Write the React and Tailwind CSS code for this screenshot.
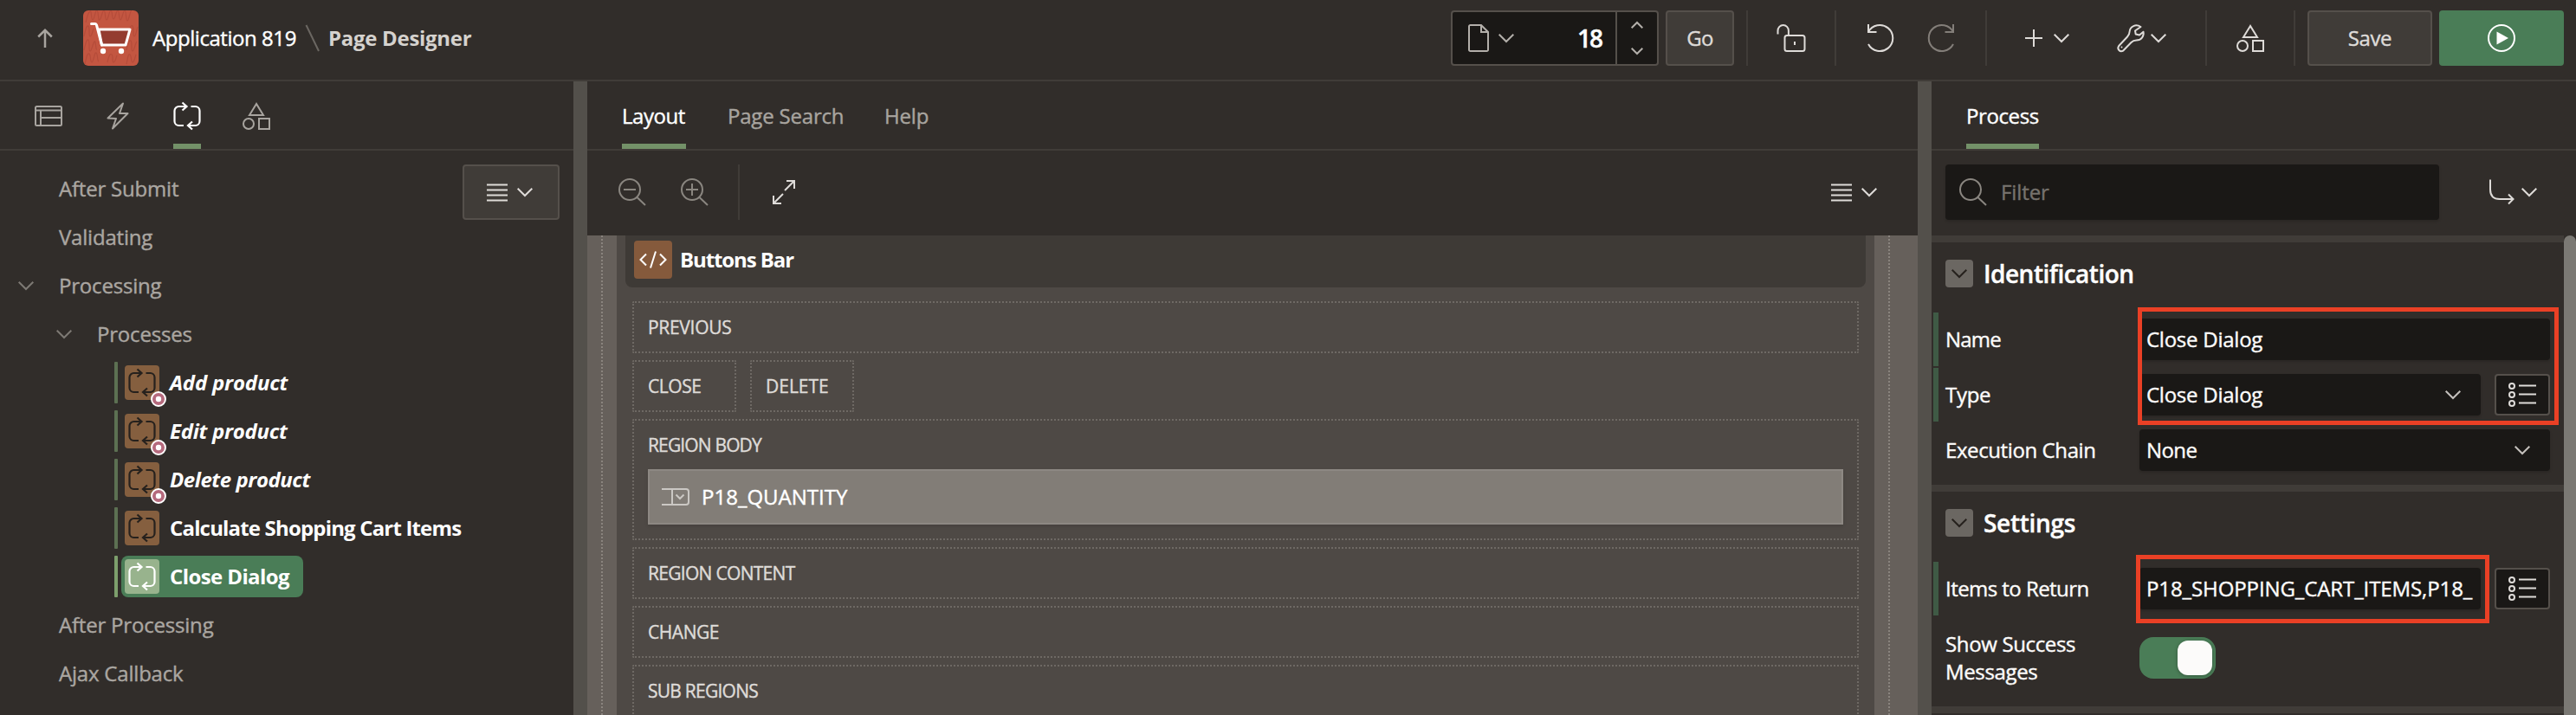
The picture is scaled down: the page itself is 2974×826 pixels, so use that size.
import React from "react";
import clsx from "clsx";

function Svg({ w = 32, h = 32, className, children, sw = 2 }) {
  return (
    <svg
      width={w}
      height={h}
      viewBox={`0 0 ${w} ${h}`}
      fill="none"
      stroke="currentColor"
      strokeWidth={sw}
      className={clsx("block shrink-0 overflow-visible", className)}
    >
      {children}
    </svg>
  );
}

const Chevron = ({ className }) => (
  <Svg w={18} h={10} className={className}>
    <path d="M0.7 0.7L9 9l8.3-8.3" />
  </Svg>
);

const ProcessIcon = ({ className }) => (
  <Svg className={className} sw={2.2}>
    <path d="M12 27H6.500a5 5 0 0 1-5-5V10a5 5 0 0 1 5-5H15.500M10.500 0.500L15.500 5l-5 4.500M20.500 5H25.500a5 5 0 0 1 5 5V22a5 5 0 0 1-5 5H17M22 22.500L17 27l5 4.500" />
  </Svg>
);

const ShapesIcon = ({ className }) => (
  <Svg className={className}>
    <path d="M16 2L8 15h16z" />
    <circle cx="7" cy="25" r="6" />
    <path d="M19 19h12v12H19z" />
  </Svg>
);

const MenuIcon = () => (
  <Svg w={24} h={21}>
    <path d="M0 1.500h24M0 7.500h24M0 13.500h24M0 19.500h24" />
  </Svg>
);

const Divider = ({ className }) => <div className={clsx("h-16 w-[2px] shrink-0 bg-[#403c38]", className)} />;

function Header() {
  return (
    <header className="flex h-[94px] shrink-0 items-start border-b-2 border-[#403c38] pt-3">
      <div className="flex h-16 items-center pl-[43px]">
        <Svg w={18} h={22} className="text-[#a8a49f]" sw={2.5}>
          <path d="M9 22V2M1.200 9.500L9 1.800l7.800 7.700" />
        </Svg>
        <div className="ml-[35px] h-16 w-16 overflow-hidden rounded-md bg-[#c35641]">
          <Svg w={64} h={64}>
            <g stroke="#b54c3a" strokeWidth="1.2">
              <path d="M3 14c2-9 3-12 5-13s1 10 3 10 3-12 5-11 1 12 3 11 3-11 5-11 1 11 3 11 3-11 5-11 1 10 3 10 3-10 5-10 1 11 3 11 3-11 5-11 1 12 3 12 3-12 5-12" />
              <path d="M1 30c2-9 3-13 5-12s0 12 2 12 3-6 4-9M52 30c1-8 3-14 5-12s0 12 2 12 3-9 4-11" />
              <path d="M1 46c2-9 3-13 5-12s0 13 2 13 3-9 5-11 1 10 3 9M50 46c1-8 3-12 5-11s0 12 2 12 3-9 5-11" />
              <path d="M2 62c2-9 3-13 5-12s1 10 3 10 3-12 5-11 1 9 3 10M28 60c2-9 3-10 5-9s0 9 2 9 3-5 4-8M50 62c2-9 2-12 4-11s1 9 3 9 3-6 4-9" />
            </g>
            <path d="M18 22h36L49 40H21.500z" fill="#943c30" stroke="#ffffff" strokeWidth="3" strokeLinejoin="round" />
            <path d="M9.500 15.500h4.500c0.800 0 1.200 0.500 1.500 1.500L21.500 40" stroke="#ffffff" strokeWidth="3" strokeLinecap="round" />
            <circle cx="23" cy="47" r="3.200" fill="#ffffff" stroke="none" />
            <circle cx="44" cy="47" r="3.200" fill="#ffffff" stroke="none" />
          </Svg>
        </div>
        <span className="ml-4 w-[169px] tracking-[-0.45px]">Application 819</span>
        <Svg w={32} h={32} className="text-[#6b6762]">
          <path d="M8.500 1L23 31" />
        </Svg>
        <span className="ml-[2px] font-bold tracking-[-0.3px] text-[#d5d2ce] [-webkit-text-stroke:0px]">Page Designer</span>
      </div>
      <div className="mr-[14px] ml-auto flex h-16 items-center">
        <div className="flex h-16 w-60 items-stretch rounded-[4px] border-2 border-[#55504b] bg-[#1a1816]">
          <div className="flex flex-1 items-center pr-4 pl-[18px]">
            <Svg w={24} h={32} className="text-[#b3afaa]">
              <path d="M3 1h12l8 8v20.500a1.500 1.500 0 0 1-1.500 1.500h-19a1.500 1.500 0 0 1-1.500-1.500v-27A1.500 1.500 0 0 1 3 1zM15 1v8h8" />
            </Svg>
            <Chevron className="ml-[11px] text-[#b3afaa]" />
            <span className="ml-auto text-[28px] font-semibold tracking-[-2px]">18</span>
          </div>
          <div className="flex w-12 flex-col items-center justify-between border-l-2 border-[#55504b] py-[11px] text-[#b3afaa]">
            <Svg w={14} h={8}>
              <path d="M0.700 7.300L7 1l6.300 6.300" />
            </Svg>
            <Svg w={14} h={8}>
              <path d="M0.700 0.700L7 7l6.300-6.300" />
            </Svg>
          </div>
        </div>
        <button className="ml-2 h-16 w-[79px] rounded-[4px] border-2 border-[#55504b] bg-[#403c38] text-[#dedbd8] tracking-[-0.6px]">Go</button>
        <Divider className="ml-[14px]" />
        <Svg w={34} h={32} className="ml-[33px] text-[#dedbd8]">
          <path d="M1.500 11.500V7.500a6.200 6.500 0 0 1 12.400 0V13" />
          <rect x="9.500" y="13" width="23" height="18" rx="2.500" />
          <path d="M21 20v4" />
        </Svg>
        <Divider className="ml-[33px]" />
        <Svg w={31} h={32} className="ml-9 text-[#dedbd8]">
          <path d="M1 0V9H10.500M1 9A15 15 0 1 1 1 23" />
        </Svg>
        <Svg w={31} h={32} className="ml-[38px] text-[#837e79]">
          <path d="M30 0V9H20.500M30 9A15 15 0 1 0 30 23" />
        </Svg>
        <Divider className="ml-9" />
        <Svg w={20} h={20} className="ml-11 text-[#dedbd8]">
          <path d="M10 0v20M0 10h20" />
        </Svg>
        <Chevron className="ml-[13px] text-[#dedbd8]" />
        <Svg className="ml-[55px] text-[#dedbd8]">
          <path
            strokeLinejoin="round"
            d="M27.500 3C22-0.500 15 2 14.500 9c0 3-1 4-2.500 5.500L2.200 25c-2.500 3.500 1.300 8 5.300 5.300l9-9.300c2-2 3.500-2.500 6-2.500 5.500 0 9-4.500 8-9.700l-4.500 3.700-4.300-1-.7-4z"
          />
          <circle cx="5.500" cy="26.500" r="1" fill="currentColor" stroke="none" />
        </Svg>
        <Chevron className="ml-[7px] text-[#dedbd8]" />
        <Divider className="ml-[45px]" />
        <ShapesIcon className="ml-[34px] text-[#dedbd8]" />
        <Divider className="ml-[34px]" />
        <button className="ml-[14px] h-16 w-36 rounded-[4px] border-2 border-[#55504b] bg-[#403c38] text-[#dedbd8] tracking-[-0.4px]">Save</button>
        <button className="ml-2 flex h-16 w-36 items-center justify-center rounded-[4px] bg-[#4a7d57]">
          <Svg>
            <circle cx="16" cy="16" r="15" />
            <path d="M10.500 8.500v15L24 16z" fill="currentColor" stroke="none" />
          </Svg>
        </button>
      </div>
    </header>
  );
}

const PROCESSES = [
  { name: "Add product", badge: true, track: "tracking-[-0.2px]" },
  { name: "Edit product", badge: true, track: "tracking-[-0.3px]" },
  { name: "Delete product", badge: true, track: "tracking-[-0.45px]" },
  { name: "Calculate Shopping Cart Items", track: "tracking-[-0.83px]" },
  { name: "Close Dialog", selected: true, track: "tracking-[-0.6px]" },
];

const treeRow = "flex h-14 items-center text-[#aaa6a1] tracking-[-0.2px]";

function ProcessTree() {
  return (
    <section className="flex w-[662px] shrink-0 flex-col">
      <nav className="flex h-20 items-start border-b-2 border-[#403c38] pl-10 text-[#a8a49f]">
        <Svg className="mt-6">
          <rect x="1" y="5" width="30" height="22" rx="1.500" />
          <path d="M1 9.500h30M7 9.500V27M7 18h24" />
        </Svg>
        <Svg className="mt-6 ml-12">
          <path d="M22 1.500L18 13h9.500L10 30.500 14 19 4.500 18.500z" strokeLinejoin="round" />
        </Svg>
        <div className="ml-12 flex h-[78px] w-8 flex-col justify-between border-b-[6px] border-[#739168] pt-6 text-white">
          <ProcessIcon />
        </div>
        <ShapesIcon className="mt-6 ml-12" />
      </nav>
      <div className="flex flex-1 items-start pt-4">
        <div className="flex-1">
          <div className={treeRow}>
            <span className="ml-[68px]">After Submit</span>
          </div>
          <div className={treeRow}>
            <span className="ml-[68px]">Validating</span>
          </div>
          <div className={treeRow}>
            <Chevron className="ml-[21px] text-[#7d7974]" />
            <span className="ml-[29px]">Processing</span>
          </div>
          <div className={treeRow}>
            <Chevron className="ml-[65px] text-[#7d7974]" />
            <span className="ml-[29px]">Processes</span>
          </div>
          {PROCESSES.map((p) => (
            <div key={p.name} className={treeRow}>
              <div className={clsx("ml-[132px] h-12 w-1 rounded-[1px]", p.selected ? "bg-[#7d9f6c]" : "bg-[#5c7052]")} />
              <div className={clsx("ml-1 flex h-12 items-center rounded-lg pr-4 pl-1", p.selected && "bg-[#4a7d57]")}>
                <div
                  className={clsx(
                    "relative flex h-10 w-10 items-center justify-center rounded-[4px]",
                    p.selected ? "bg-[#98b38d] text-white" : "bg-[#855f3f] text-[#26211d]"
                  )}
                >
                  <ProcessIcon />
                  {p.badge && (
                    <Svg w={18} h={18} className="absolute top-[30px] left-[30px]">
                      <circle cx="9" cy="9" r="8" fill="#b56a7d" stroke="#ffffff" />
                      <circle cx="9" cy="9" r="3.200" fill="#ffffff" stroke="none" />
                    </Svg>
                  )}
                </div>
                <span className={clsx("ml-3 whitespace-nowrap font-bold text-white [-webkit-text-stroke:0px]", p.track, p.badge && "italic")}>{p.name}</span>
              </div>
            </div>
          ))}
          <div className={treeRow}>
            <span className="ml-[68px]">After Processing</span>
          </div>
          <div className={treeRow}>
            <span className="ml-[68px]">Ajax Callback</span>
          </div>
        </div>
        <button className="mr-4 -ml-28 flex h-16 w-28 items-center justify-center gap-[11px] rounded-[4px] border-2 border-[#55504b] bg-[#403c38] pr-[3px] text-[#dedbd8]">
          <MenuIcon />
          <Chevron />
        </button>
      </div>
    </section>
  );
}

const slotBox = "flex items-center rounded-[2px] border-2 border-dotted border-[#6e6964] pt-[2px] pl-4 text-[21px] text-[#dedbd8]";

function Slot({ children, className }) {
  return <div className={clsx(slotBox, "h-[60px] shrink-0", className)}>{children}</div>;
}

function Canvas() {
  return (
    <section className="flex w-[1536px] shrink-0 flex-col">
      <nav className="flex h-20 items-start border-b-2 border-[#403c38] pl-10">
        <span className="flex h-[78px] w-[74px] items-center border-b-[6px] border-[#739168] pt-2 text-white tracking-[-0.45px]">Layout</span>
        <span className="ml-12 flex h-[78px] w-[134px] items-center whitespace-nowrap pt-[2px] tracking-[-0.2px] text-[#a8a49f]">Page Search</span>
        <span className="ml-[47px] flex h-[78px] items-center pt-[2px] tracking-[-0.2px] text-[#a8a49f]">Help</span>
      </nav>
      <div className="flex h-[98px] shrink-0 items-center pb-[2px] pl-9 text-[#8a8680]">
        <Svg>
          <circle cx="13" cy="13" r="12" />
          <path d="M21.500 22l9.500 9M6 13h14" />
        </Svg>
        <Svg className="ml-10">
          <circle cx="13" cy="13" r="12" />
          <path d="M21.500 22l9.500 9M6 13h14M13 6v14" />
        </Svg>
        <Divider className="ml-[34px]" />
        <Svg w={28} h={28} className="ml-[37px] text-[#dedbd8]">
          <path d="M15 12L26 1M17 1h9v9M13 16L2 27M2 18v9h9" />
        </Svg>
        <div className="mr-[47px] ml-auto flex items-center gap-[11px] text-[#dedbd8]">
          <MenuIcon />
          <Chevron />
        </div>
      </div>
      <div className="flex h-[554px] shrink-0 overflow-hidden bg-[#66605b]">
        <div className="w-[18px] shrink-0 border-r-2 border-dotted border-[#8a847e]" />
        <div className="ml-4 w-[1452px] shrink-0 bg-[#4e4945]">
          <div className="mr-[10px] ml-[10px] flex h-[60px] items-center rounded-b-lg bg-[#3e3a36] pb-1 pl-[10px]">
            <div className="flex h-11 w-11 items-center justify-center rounded-[4px] bg-[#855a3c]">
              <Svg w={32} h={20}>
                <path d="M8 3.500L1.500 10 8 16.500M24 3.500L30.500 10 24 16.500M19 0.500L13 19.500" />
              </Svg>
            </div>
            <span className="ml-[9px] font-bold tracking-[-1.1px] text-white [-webkit-text-stroke:0px]">Buttons Bar</span>
          </div>
          <div className="mt-4 ml-[18px] flex w-[1416px] flex-col gap-2">
            <Slot className="tracking-[-0.3px]">PREVIOUS</Slot>
            <div className="flex gap-4">
              <Slot className="w-[120px] tracking-[-0.45px]">CLOSE</Slot>
              <Slot className="w-[120px] tracking-[0px]">DELETE</Slot>
            </div>
            <div className="h-[140px] shrink-0 rounded-[2px] border-2 border-dotted border-[#6e6964] px-4 text-[21px] text-[#dedbd8]">
              <div className="flex h-14 items-center pt-[2px] tracking-[-0.85px]">REGION BODY</div>
              <div className="flex h-16 items-center border-2 border-[#8d8883] bg-[#827d77] pl-[14px] text-[24px] text-white shadow-[0_2px_4px_rgba(0,0,0,0.12)]">
                <Svg w={32} h={20} className="text-[#cbc8c4]">
                  <path d="M0 1H28a3 3 0 0 1 3 3V16a3 3 0 0 1-3 3H0M12 1V19M16.500 7.500l4.500 4.500 4.500-4.500" />
                </Svg>
                <span className="ml-[14px] tracking-[0px]">P18_QUANTITY</span>
              </div>
            </div>
            <Slot className="tracking-[-0.7px]">REGION CONTENT</Slot>
            <Slot className="tracking-[-0.45px]">CHANGE</Slot>
            <Slot className="tracking-[-0.75px]">SUB REGIONS</Slot>
          </div>
        </div>
        <div className="ml-4 w-[2px] shrink-0 border-l-2 border-dotted border-[#8a847e]" />
      </div>
    </section>
  );
}

const Marker = ({ on }) => <div className={clsx("mr-2 ml-[2px] h-[62px] w-[6px]", on && "bg-[#3f5a45]")} />;

const field = "flex h-12 items-center rounded-[4px] bg-[#1a1816] pl-2 shadow-[0_2px_3px_rgba(0,0,0,0.15)]";

const ListButton = () => (
  <button className="ml-4 flex h-12 w-16 items-center justify-center rounded-[4px] border-2 border-[#55504b] bg-[#1a1816] text-[#dedbd8]">
    <Svg w={32} h={28}>
      <circle cx="4" cy="4" r="3" />
      <circle cx="4" cy="14" r="3" />
      <circle cx="4" cy="24" r="3" />
      <path d="M12 3.500h20M12 13.500h20M12 23.500h20" />
    </Svg>
  </button>
);

function Row({ label, marked, track, children }) {
  return (
    <div className="flex h-16 shrink-0 items-center">
      <Marker on={marked} />
      <div className={clsx("w-56 shrink-0", track)}>{label}</div>
      {children}
    </div>
  );
}

function GroupHeading({ children, track }) {
  return (
    <div className="flex h-20 shrink-0 items-start border-t-8 border-[#403c38] pt-5 pl-4">
      <div className="flex h-8 w-8 items-center justify-center rounded-[4px] bg-[#6b6762] text-[#26211d]">
        <Chevron />
      </div>
      <h2 className={clsx("ml-3 text-[28px] leading-8 font-semibold text-white", track)}>{children}</h2>
    </div>
  );
}

function Properties() {
  return (
    <section className="flex flex-1 flex-col">
      <nav className="flex h-20 shrink-0 items-start border-b-2 border-[#403c38] pl-10">
        <span className="flex h-[78px] w-[84px] items-center border-b-[6px] border-[#739168] pt-2 text-white tracking-[-0.4px]">Process</span>
      </nav>
      <div className="flex h-[98px] shrink-0 items-start pt-4 pl-4">
        <div className="flex h-16 w-[570px] items-center rounded-[4px] bg-[#1a1816] pl-4 text-[#8a8680] shadow-[0_2px_3px_rgba(0,0,0,0.15)]">
          <Svg>
            <circle cx="13" cy="13" r="12" />
            <path d="M21.500 22l9.500 9" />
          </Svg>
          <span className="ml-4 text-[#76726d]">Filter</span>
        </div>
        <div className="flex h-16 items-center pl-[57px] text-[#dedbd8]">
          <Svg w={30} h={30}>
            <path d="M2 0.500V12C2 19 6 23 13 23H28.500M23 17.500l5.500 5.500-5.500 5.500" />
          </Svg>
          <Chevron className="ml-2" />
        </div>
      </div>
      <div className="flex h-[554px] shrink-0 overflow-hidden">
        <div className="relative flex w-[730px] shrink-0 flex-col text-[#fcfbfa]">
          <GroupHeading track="tracking-[-0.5px]">Identification</GroupHeading>
          <div className="mt-2 flex flex-col">
            <Row label="Name" track="tracking-[-0.8px]" marked>
              <div className={clsx(field, "w-[474px] tracking-[-0.25px]")}>Close Dialog</div>
            </Row>
            <Row label="Type" track="tracking-[-0.3px]" marked>
              <div className={clsx(field, "w-[394px] justify-between pr-[23px] tracking-[-0.25px]")}>
                Close Dialog
                <Chevron className="text-[#c4c0bc]" />
              </div>
              <ListButton />
            </Row>
            <Row label="Execution Chain" track="tracking-[-0.4px]">
              <div className={clsx(field, "w-[474px] justify-between pr-[23px] tracking-[-0.6px]")}>
                None
                <Chevron className="text-[#c4c0bc]" />
              </div>
            </Row>
          </div>
          <div className="my-2 flex flex-col">
            <GroupHeading track="tracking-[-0.3px]">Settings</GroupHeading>
          </div>
          <Row label="Items to Return" track="tracking-[-0.55px]" marked>
            <div className={clsx(field, "w-[394px] whitespace-nowrap tracking-[-0.1px]")}>P18_SHOPPING_CART_ITEMS,P18_</div>
            <ListButton />
          </Row>
          <div className="flex h-24 shrink-0 pt-4 pl-4">
            <div className="w-56 leading-8 tracking-[-0.35px]">
              Show Success
              <br />
              Messages
            </div>
            <div className="mt-2 flex h-12 w-[88px] items-center justify-end rounded-2xl bg-[#4a7d57] pr-1">
              <div className="h-10 w-10 rounded-xl bg-[#fcfbfa] shadow-[0_1px_4px_rgba(0,0,0,0.3)]" />
            </div>
          </div>
          <div className="mt-2 h-2 shrink-0 bg-[#403c38]" />
          <div className="absolute top-[83px] left-[238px] h-[136px] w-[486px] border-[5px] border-[#ea4025]" />
          <div className="absolute top-[369px] left-[236px] h-[79px] w-[408px] border-[5px] border-[#ea4025]" />
        </div>
        <div className="w-[14px] shrink-0 rounded-t-full bg-[#7b7974]" />
      </div>
    </section>
  );
}

const Splitter = () => <div className="w-4 shrink-0 bg-[#53504b]" />;

export default function App() {
  return (
    <div className="flex h-[826px] w-[2974px] flex-col overflow-hidden bg-[#312d2a] font-['Open_Sans',sans-serif] text-[24px] tracking-[-0.1px] text-white [-webkit-text-stroke:0.4px_currentColor]">
      <Header />
      <main className="flex flex-1">
        <ProcessTree />
        <Splitter />
        <Canvas />
        <Splitter />
        <Properties />
      </main>
    </div>
  );
}
